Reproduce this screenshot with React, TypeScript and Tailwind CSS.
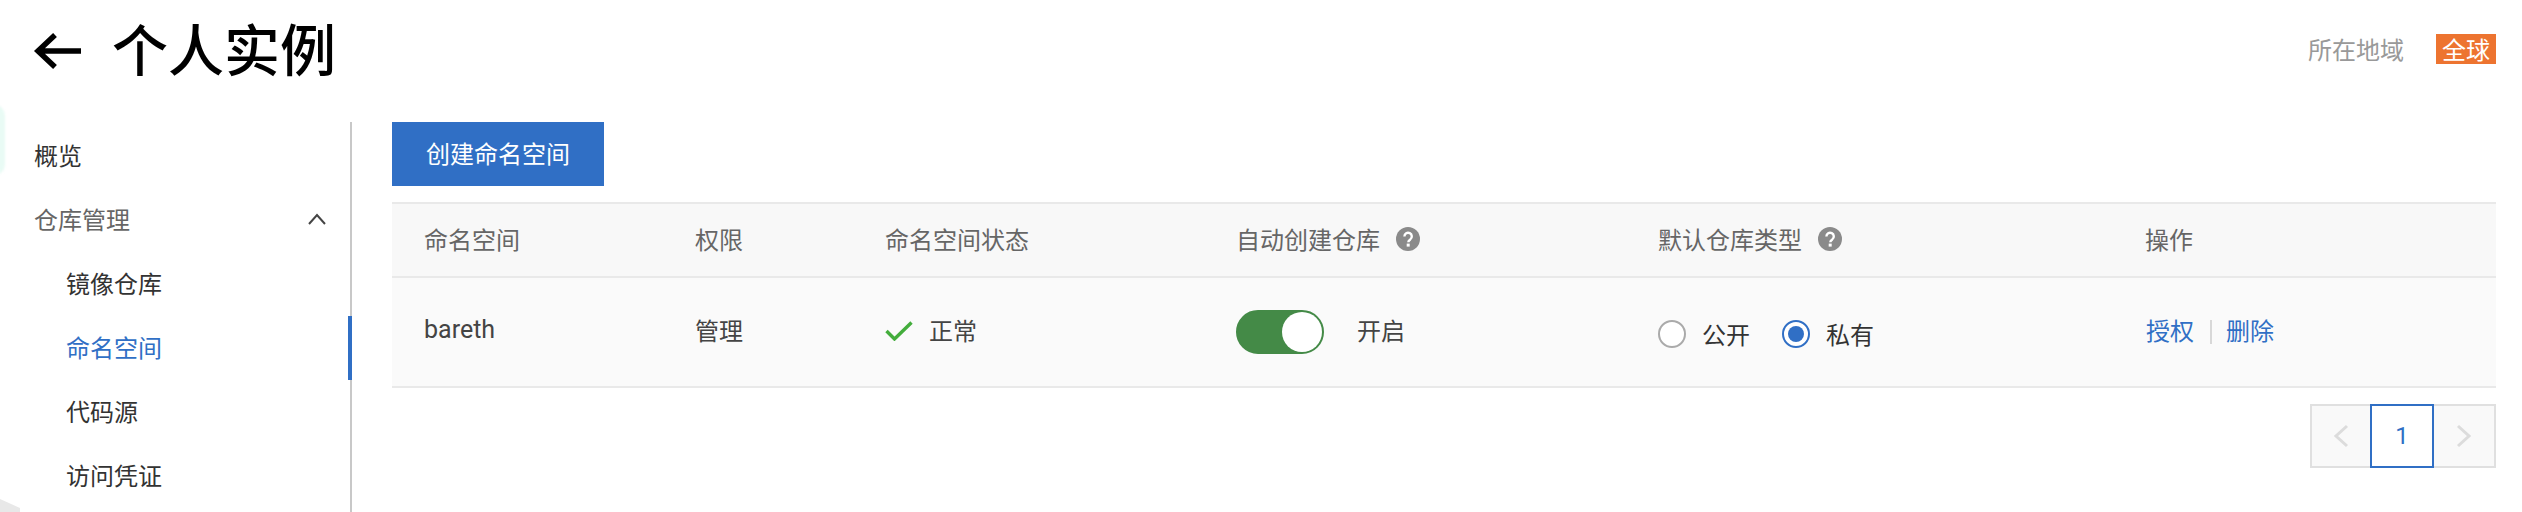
const sans = "font-['Noto_Sans_CJK_SC','Noto_Sans',sans-serif]";

const navItems = [
  { label: "镜像仓库" },
  { label: "命名空间", active: true },
  { label: "代码源" },
  { label: "访问凭证" },
];

function HelpIcon() {
  return (
    <svg viewBox="0 0 24 24" className="ml-[16px] h-[24px] w-[24px]">
      <circle cx="12" cy="12" r="12" fill="#8a8a8a" />
      <path d="M8.4 9.4a3.7 3.7 0 1 1 5.9 3c-1.3.9-2 1.4-2 2.8" fill="none" stroke="#fff" strokeWidth="2.4" />
      <rect x="10.7" y="16.6" width="3" height="3" fill="#fff" />
    </svg>
  );
}

function Radio({ label, checked }: { label: string; checked?: boolean }) {
  return (
    <div className="flex items-center">
      <span
        className={`flex h-[28px] w-[28px] items-center justify-center rounded-full border-2 bg-white ${
          checked ? "border-[#306fc5]" : "border-[#aaaaaa]"
        }`}
      >
        {checked && <span className="h-[16px] w-[16px] rounded-full bg-[#306fc5]" />}
      </span>
      <span className="ml-[16px] text-[#333]">{label}</span>
    </div>
  );
}

export default function App() {
  return (
    <div className={`relative h-[512px] w-[2522px] overflow-hidden bg-white text-[24px] leading-[32px] font-normal ${sans}`}>
      {/* faint background shapes at the left edge */}
      <span className="absolute -left-[16px] top-[105px] h-[70px] w-[21px] rounded-full bg-[#e9fbf5] blur-[1px]" />
      <svg viewBox="0 0 20 13" className="absolute bottom-0 left-0 h-[13px] w-[20px]">
        <path d="M0 0 20 9V13H0Z" fill="#e8e8e8" />
      </svg>

      {/* Title bar */}
      <div className="flex h-[122px] items-start justify-between pr-[26px]">
        <div className="flex items-start pl-[33px] pt-[14px]">
          <svg viewBox="0 0 48 38" className="mt-[18px] h-[38px] w-[48px]">
            <path d="M22 3 5 19l17 16M5 19h43" fill="none" stroke="#000" strokeWidth="5.5" />
          </svg>
          <h1 className="ml-[31px] text-[56px] leading-[66px] font-medium text-black">个人实例</h1>
        </div>
        <div className="flex items-center pt-[33px]">
          <span className="text-[#999]">所在地域</span>
          <span className="ml-[32px] flex h-[30px] w-[60px] items-center justify-center bg-[#ed7430] text-white">全球</span>
        </div>
      </div>

      <div className="flex">
        {/* Sidebar */}
        <div className="h-[390px] w-[352px] border-r-2 border-[#c8c8c8] pt-[2px]">
          <div className="flex h-[64px] items-center pb-[2px] pl-[34px] text-[#333]">概览</div>
          <div className="flex h-[64px] items-center justify-between pb-[2px] pl-[34px] pr-[24px] text-[#666]">
            <span>仓库管理</span>
            <svg viewBox="0 0 18 12" className="h-[12px] w-[18px]">
              <path d="M1 11 9 2l8 9" fill="none" stroke="#444" strokeWidth="2" />
            </svg>
          </div>
          {navItems.map((item) => (
            <div
              key={item.label}
              className={`relative flex h-[64px] items-center pb-[2px] pl-[66px] ${
                item.active ? "text-[#306fc5]" : "text-[#333]"
              }`}
            >
              {item.label}
              {item.active && <span className="absolute -right-[2px] top-0 h-[64px] w-[4px] bg-[#306fc5]" />}
            </div>
          ))}
        </div>

        {/* Main */}
        <div className="flex-1 pl-[40px] pr-[26px]">
          <button className="h-[64px] w-[212px] bg-[#306fc5] pb-[2px] text-white">创建命名空间</button>

          <div className="mt-[16px] border-y-2 border-[#e9e9e9]">
            <div className="grid h-[74px] grid-cols-[303px_190px_351px_422px_487px_1fr] items-center border-b-2 border-[#e9e9e9] bg-[#f8f8f8] pb-[2px] text-[#666]">
              <span className="pl-[32px]">命名空间</span>
              <span>权限</span>
              <span>命名空间状态</span>
              <span className="flex items-center">自动创建仓库<HelpIcon /></span>
              <span className="flex items-center">默认仓库类型<HelpIcon /></span>
              <span>操作</span>
            </div>
            <div className="grid h-[108px] grid-cols-[303px_190px_351px_422px_488px_1fr] items-center bg-[#fafafa] text-[#444]">
              <span className="mb-[5px] pl-[32px] font-['Roboto'] text-[25px] font-normal">bareth</span>
              <span className="mb-[5px]">管理</span>
              <span className="flex items-center">
                <svg viewBox="0 0 28 20" className="mb-[2px] h-[20px] w-[28px]">
                  <path d="M1.5 10 9.5 18 26.5 1.5" fill="none" stroke="#43ad3c" strokeWidth="3.4" />
                </svg>
                <span className="mb-[5px] ml-[16px]">正常</span>
              </span>
              <span className="flex items-center">
                <span className="flex h-[44px] w-[88px] justify-end rounded-full border-2 border-[#448a47] bg-[#448a47]">
                  <span className="h-[40px] w-[40px] rounded-full bg-white" />
                </span>
                <span className="mb-[5px] ml-[33px]">开启</span>
              </span>
              <span className="flex items-center gap-[32px] pt-[3px]">
                <Radio label="公开" />
                <Radio label="私有" checked />
              </span>
              <span className="mb-[5px] flex items-center text-[#306fc5]">
                授权
                <span className="ml-[16px] mr-[14px] mt-[4px] h-[24px] w-[2px] bg-[#d8d8d8]" />
                删除
              </span>
            </div>
          </div>

          {/* Pagination */}
          <div className="mt-[16px] flex justify-end">
            <div className="flex h-[64px] w-[186px] border-2 border-[#e0e0e0] bg-[#f9f9f9]">
              <span className="flex w-[58px] items-center justify-center">
                <svg viewBox="0 0 16 24" className="h-[24px] w-[16px]">
                  <path d="M14 2 3 12l11 10" fill="none" stroke="#dcdcdc" strokeWidth="3" />
                </svg>
              </span>
              <span className="-my-[2px] flex w-[64px] items-center justify-center border-2 border-[#306fc5] bg-white font-['Roboto'] font-normal text-[#306fc5]">
                1
              </span>
              <span className="flex flex-1 items-center justify-center">
                <svg viewBox="0 0 16 24" className="h-[24px] w-[16px]">
                  <path d="M2 2l11 10L2 22" fill="none" stroke="#dcdcdc" strokeWidth="3" />
                </svg>
              </span>
            </div>
          </div>
        </div>
      </div>
    </div>
  );
}
